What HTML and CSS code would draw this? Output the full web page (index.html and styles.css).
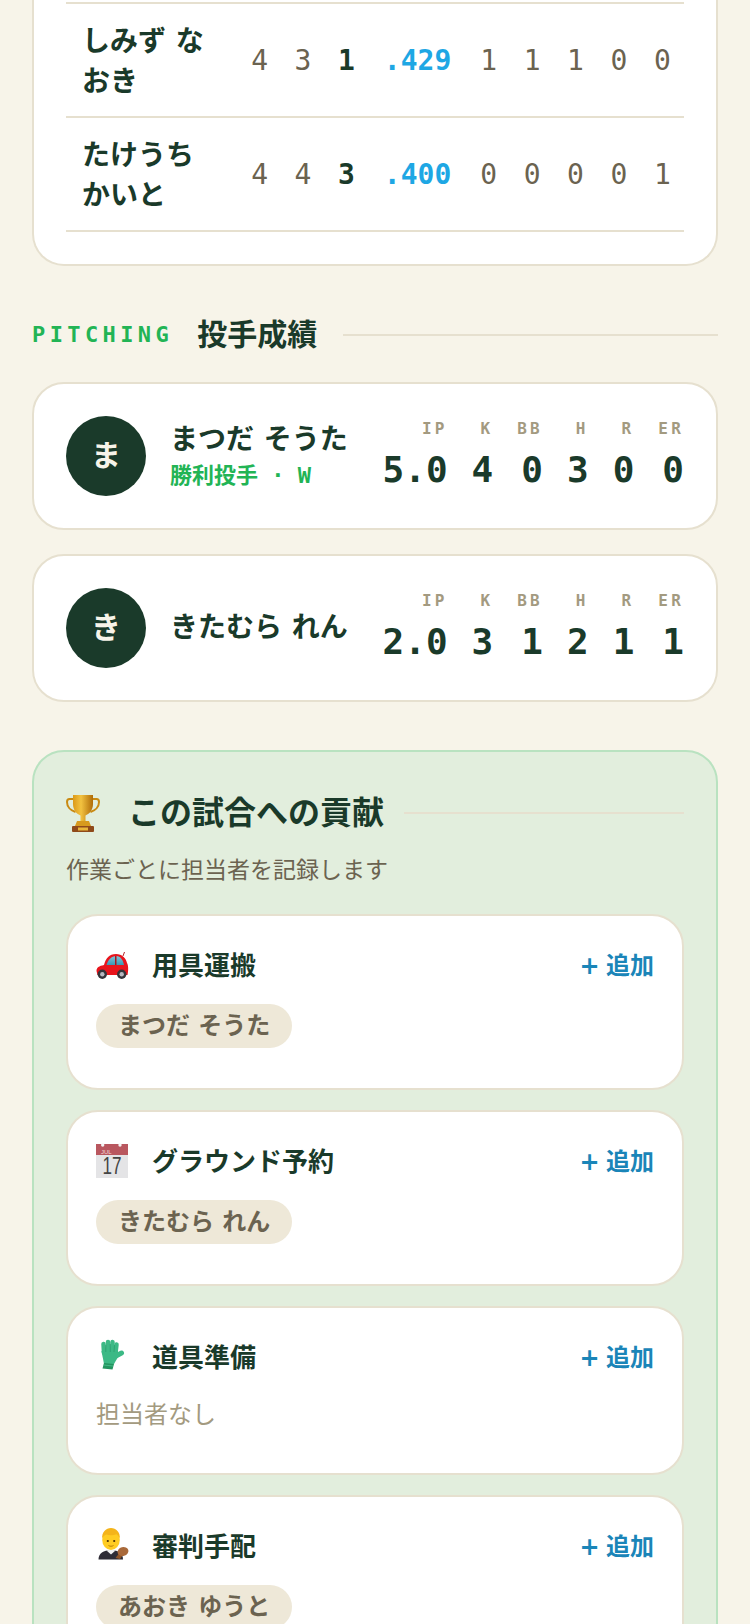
FILE: index.html
```html
<!DOCTYPE html>
<html lang="ja">

<head>
    <meta charset="utf-8">
    <meta name="viewport" content="width=device-width, initial-scale=1.0">
    <title>試合結果</title>
    <link rel="stylesheet" href="styles.css">
</head>

<body>
    <main>
        <section class="card batting">
            <div class="bat-row">
                <div class="bat-name">しみず なおき</div>
                <div class="num">4</div>
                <div class="num">3</div>
                <div class="num strong">1</div>
                <div class="num avg">.429</div>
                <div class="num">1</div>
                <div class="num">1</div>
                <div class="num">1</div>
                <div class="num">0</div>
                <div class="num">0</div>
            </div>
            <div class="bat-row">
                <div class="bat-name">たけうち かいと</div>
                <div class="num">4</div>
                <div class="num">4</div>
                <div class="num strong">3</div>
                <div class="num avg">.400</div>
                <div class="num">0</div>
                <div class="num">0</div>
                <div class="num">0</div>
                <div class="num">0</div>
                <div class="num">1</div>
            </div>
        </section>

        <div class="section-head">
            <span class="section-label">PITCHING</span>
            <h2>投手成績</h2>
            <span class="rule"></span>
        </div>

        <section class="card pitcher">
            <div class="avatar">ま</div>
            <div class="pitcher-info">
                <div class="pitcher-name">まつだ そうた</div>
                <div class="pitcher-note">勝利投手 · W</div>
            </div>
            <div class="stats">
                <div class="stat"><span>IP</span><b>5.0</b></div>
                <div class="stat"><span>K</span><b>4</b></div>
                <div class="stat"><span>BB</span><b>0</b></div>
                <div class="stat"><span>H</span><b>3</b></div>
                <div class="stat"><span>R</span><b>0</b></div>
                <div class="stat"><span>ER</span><b>0</b></div>
            </div>
        </section>

        <section class="card pitcher">
            <div class="avatar">き</div>
            <div class="pitcher-info">
                <div class="pitcher-name">きたむら れん</div>
            </div>
            <div class="stats">
                <div class="stat"><span>IP</span><b>2.0</b></div>
                <div class="stat"><span>K</span><b>3</b></div>
                <div class="stat"><span>BB</span><b>1</b></div>
                <div class="stat"><span>H</span><b>2</b></div>
                <div class="stat"><span>R</span><b>1</b></div>
                <div class="stat"><span>ER</span><b>1</b></div>
            </div>
        </section>

        <section class="contrib">
            <div class="contrib-head">
                <svg class="trophy" viewBox="0 0 34 38">
                    <defs>
                        <linearGradient id="gold" x1="0" x2="1" y1="0" y2="0">
                            <stop offset="0" stop-color="#dc9a18"/>
                            <stop offset="0.4" stop-color="#f2c240"/>
                            <stop offset="1" stop-color="#b06c08"/>
                        </linearGradient>
                    </defs>
                    <path d="M8 5H3.500C1.500 5 1 6.500 1 8c0 4.500 3.500 8.500 8.500 10M26 5h4.500C32.500 5 33 6.500 33 8c0 4.500-3.500 8.500-8.500 10" fill="none" stroke="#c98a12" stroke-width="2"/>
                    <path d="M7 1h20v9c0 6.500-4 10-7.500 11.500V27h-5v-5.500C11 20 7 16.500 7 10z" fill="url(#gold)"/>
                    <path d="M11 27h12l2 5H9z" fill="#d79a1e"/>
                    <rect x="6" y="32" width="22" height="6" rx="1" fill="#8f4a1a"/>
                    <rect x="12" y="33.500" width="10" height="3" fill="#e9b53a"/>
                </svg>
                <h2>この試合への貢献</h2>
                <span class="rule"></span>
            </div>
            <p class="contrib-sub">作業ごとに担当者を記録します</p>

            <div class="tasks">
                <div class="task">
                    <div class="task-head">
                        <svg class="emoji" viewBox="0 0 36 36">
                            <defs>
                                <linearGradient id="glass" x1="0" x2="0" y1="0" y2="1">
                                    <stop offset="0" stop-color="#7fc4d8"/>
                                    <stop offset="1" stop-color="#3a97b4"/>
                                </linearGradient>
                            </defs>
                            <path d="M27 9l1.500-4" stroke="#b3262a" stroke-width="1"/>
                            <path d="M.5 24C.5 20.500 3 19 8 18 10 11 13 7 20 7c6 0 10 4 11 9 1.500 2 1.500 8 .5 12h-30z" fill="#e8141c"/>
                            <path d="M10.500 18c1.500-5 4.500-9 10-9 4 0 6.500 4 7.500 9z" fill="url(#glass)"/>
                            <path d="M19 9h1.500v9H19z" fill="#a8161c"/>
                            <circle cx="6.300" cy="27.300" r="4.700" fill="#35343a"/>
                            <circle cx="6.300" cy="27.300" r="2.200" fill="#b8b8c0"/>
                            <circle cx="25.700" cy="27.300" r="4.700" fill="#35343a"/>
                            <circle cx="25.700" cy="27.300" r="2.200" fill="#b8b8c0"/>
                        </svg>
                        <h3>用具運搬</h3>
                        <button class="add">+ 追加</button>
                    </div>
                    <div class="task-body"><span class="chip">まつだ そうた</span></div>
                </div>

                <div class="task">
                    <div class="task-head">
                        <svg class="emoji" viewBox="0 0 36 36">
                            <rect x="0" y="11" width="32" height="24" fill="#e4e4e6"/>
                            <rect x="0" y="1" width="32" height="11" fill="#b9575f"/>
                            <circle cx="6.700" cy="2" r="1.700" fill="#f4f4f4"/>
                            <circle cx="24" cy="2" r="1.700" fill="#f4f4f4"/>
                            <text class="cal-month" x="5" y="10.500">JUL</text>
                            <text class="cal-day" x="6.500" y="31" textLength="19" lengthAdjust="spacingAndGlyphs">17</text>
                        </svg>
                        <h3>グラウンド予約</h3>
                        <button class="add">+ 追加</button>
                    </div>
                    <div class="task-body"><span class="chip">きたむら れん</span></div>
                </div>

                <div class="task">
                    <div class="task-head">
                        <svg class="emoji" viewBox="0 0 36 36">
                            <g stroke="#3cb985" stroke-linecap="round" fill="none">
                                <path d="M7.500 5l.5 9" stroke-width="4.500"/>
                                <path d="M12 3v11" stroke-width="4.500"/>
                                <path d="M16.500 3L16 14" stroke-width="4.500"/>
                                <path d="M20.500 5.500L19.500 14" stroke-width="4.500"/>
                                <path d="M18 18l7.500-4" stroke-width="5"/>
                            </g>
                            <path d="M5.500 12H22v6l-4 7H8z" fill="#3cb985"/>
                            <path d="M9.800 6v7M14.300 5v8M18.500 6l-.5 7" stroke="#2a9a6c" stroke-width=".7"/>
                            <path d="M8 24l10 1-1.500 5.500-10-1z" fill="#23945f"/>
                            <path d="M7.500 26l9.500 1" stroke="#4ac491" stroke-width=".8"/>
                        </svg>
                        <h3>道具準備</h3>
                        <button class="add">+ 追加</button>
                    </div>
                    <div class="task-body"><span class="no-one">担当者なし</span></div>
                </div>

                <div class="task">
                    <div class="task-head">
                        <svg class="emoji" viewBox="0 0 36 36">
                            <path d="M2.500 31.500c0-6 5-9.500 12.500-9.500s12 3.500 12 9.500z" fill="#2e2c36"/>
                            <path d="M10.500 22.500l4.500 4 4.500-4-4.500-1z" fill="#f2f2f2"/>
                            <ellipse cx="15" cy="12" rx="8.800" ry="10" fill="#ffcc22"/>
                            <path d="M6.200 11C5.500 4 10 0 15 0s9.500 4 8.800 11c-.7-2.500-2-4.200-3.500-4.800-3 1.400-7.500 1.400-9.800.4-1.800.6-3.800 2-4.300 4.400z" fill="#f4b41a"/>
                            <circle cx="11.800" cy="13" r="1.100" fill="#4a3000"/>
                            <circle cx="18.200" cy="13" r="1.100" fill="#4a3000"/>
                            <path d="M12.500 17.500c1.500 1 3.500 1 5 0" stroke="#a86a00" stroke-width=".8" fill="none"/>
                            <path d="M19.500 30l5-6.500 3.500 2-4 5.500z" fill="#8f5326"/>
                            <ellipse cx="27" cy="23.500" rx="5.500" ry="4.500" transform="rotate(-15 27 23.500)" fill="#a9693a"/>
                        </svg>
                        <h3>審判手配</h3>
                        <button class="add">+ 追加</button>
                    </div>
                    <div class="task-body"><span class="chip">あおき ゆうと</span></div>
                </div>
            </div>
        </section>
    </main>
</body>

</html>
```

FILE: styles.css
```css
* {
    box-sizing: border-box;
}

html,
body {
    height: 1624px;
    overflow: hidden;
}

body {
    margin: 0;
    background: #f7f4e9;
    color: #1a3a2a;
    font-family: "DejaVu Sans", "Noto Sans CJK JP", sans-serif;
    font-size: 24px;
    line-height: 1.4;
}

main {
    padding: 0 32px;
}

h2,
h3,
p {
    margin: 0;
}

.card {
    background: #fff;
    border: 2px solid #e6e0cf;
    border-radius: 32px;
}

/* table is cut off by the top of the screen */
.batting {
    border-top: 0;
    border-radius: 0 0 32px 32px;
    padding: 2px 32px 32px;
}

.bat-row {
    display: grid;
    grid-template-columns: 1fr repeat(3, 43.4px) 99px repeat(5, 43.4px);
    align-items: center;
    border-top: 2px solid #e6e0cf;
    padding: 18px 0 14px;
}

.bat-row:last-child {
    border-bottom: 2px solid #e6e0cf;
}

.bat-name {
    padding: 0 24px 0 16px;
    font-size: 28px;
    font-weight: 700;
    line-height: 40px;
}

.num {
    padding-bottom: 2px;
    font-family: "DejaVu Sans Mono", monospace;
    font-size: 28px;
    color: #6b6350;
    text-align: center;
}

.num.strong {
    color: #1a3a2a;
    font-weight: 700;
}

.num.avg {
    color: #1ea7e4;
    font-weight: 700;
}

.section-head {
    display: flex;
    align-items: center;
    gap: 24px;
    margin: 48px 0 26px;
}

.section-label {
    font-family: "DejaVu Sans Mono", monospace;
    font-size: 22px;
    font-weight: 700;
    letter-spacing: 0.2em;
    color: #22b455;
}

.section-head h2 {
    margin-right: 2px;
    font-size: 30px;
    font-weight: 700;
}

.rule {
    flex: 1;
    height: 2px;
    background: #e6e0cf;
}

.pitcher {
    display: flex;
    align-items: center;
    gap: 24px;
    padding: 32px;
    margin-bottom: 24px;
}

.avatar {
    flex: none;
    display: flex;
    align-items: center;
    justify-content: center;
    width: 80px;
    height: 80px;
    border-radius: 50%;
    background: #1a3a2a;
    color: #f7f4e9;
    font-size: 30px;
    font-weight: 700;
}

.pitcher-info {
    flex: 1;
}

.pitcher-name {
    font-size: 28px;
    font-weight: 700;
    white-space: nowrap;
}

.pitcher-note {
    margin-top: 2px;
    font-family: "DejaVu Sans Mono", "Noto Sans CJK JP", monospace;
    font-size: 22px;
    font-weight: 700;
    color: #22b455;
    white-space: nowrap;
}

.stats {
    display: flex;
    gap: 24px;
    margin-top: 1px;
}

.stat {
    display: flex;
    flex-direction: column;
    align-items: flex-end;
    gap: 4px;
    font-family: "DejaVu Sans Mono", monospace;
}

.stat span {
    font-size: 16px;
    font-weight: 700;
    letter-spacing: 0.2em;
    color: #a39a80;
}

.stat b {
    font-size: 36px;
    font-weight: 700;
    line-height: 50px;
}

.contrib {
    margin-top: 48px;
    padding: 39px 32px 32px;
    background: #e2eedd;
    border: 2px solid #b9e2c0;
    border-radius: 32px;
}

.contrib-head {
    display: flex;
    align-items: center;
    gap: 20px;
}

.trophy {
    flex: none;
    width: 34px;
    height: 38px;
    margin-right: 8px;
}

.contrib-head h2 {
    font-size: 32px;
    font-weight: 700;
}

.contrib-sub {
    margin: 18px 0 28px;
    font-size: 23px;
    color: #6b6350;
}

.tasks {
    display: flex;
    flex-direction: column;
    gap: 20px;
}

.task {
    background: #fff;
    border: 2px solid #e6e0cf;
    border-radius: 32px;
    padding: 28px 28px 30px;
}

.task-head {
    display: flex;
    align-items: center;
    gap: 20px;
    height: 42px;
    margin-bottom: 18px;
}

.emoji {
    flex: none;
    width: 36px;
    height: 36px;
}

.cal-month {
    font-family: "Liberation Sans", sans-serif;
    font-size: 6px;
    fill: #f3d9da;
}

.cal-day {
    font-family: "Liberation Sans", sans-serif;
    font-size: 24px;
    fill: #444;
}

.task-head h3 {
    flex: 1;
    padding-top: 2px;
    font-size: 26px;
    font-weight: 700;
}

.add {
    padding: 0 0 2px;
    border: 0;
    background: none;
    font-family: inherit;
    font-size: 24px;
    font-weight: 700;
    word-spacing: -2px;
    color: #1a85b8;
}

.task-body {
    display: flex;
    padding-bottom: 10px;
}

.chip {
    height: 44px;
    padding: 0 22px;
    border-radius: 22px;
    background: #eee8d8;
    color: #6b6350;
    font-size: 24px;
    font-weight: 700;
    line-height: 44px;
}

.no-one {
    height: 37px;
    padding-top: 3px;
    font-size: 24px;
    color: #a39a80;
}
```
